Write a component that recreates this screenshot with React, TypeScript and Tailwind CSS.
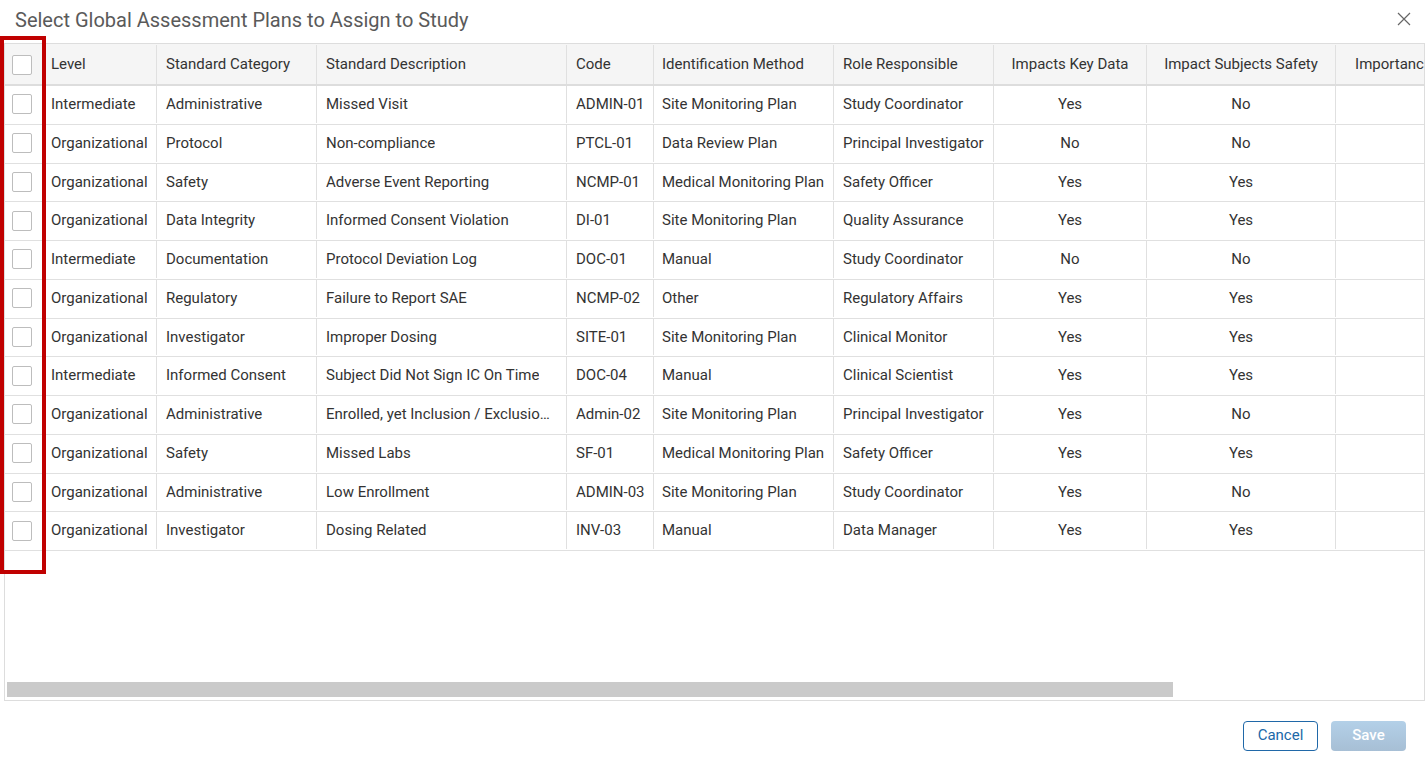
import React from "react";

type Row = {
  level: string;
  category: string;
  description: string;
  code: string;
  method: string;
  role: string;
  keyData: string;
  safety: string;
};

const rows: Row[] = [
  { level: "Intermediate", category: "Administrative", description: "Missed Visit", code: "ADMIN-01", method: "Site Monitoring Plan", role: "Study Coordinator", keyData: "Yes", safety: "No" },
  { level: "Organizational", category: "Protocol", description: "Non-compliance", code: "PTCL-01", method: "Data Review Plan", role: "Principal Investigator", keyData: "No", safety: "No" },
  { level: "Organizational", category: "Safety", description: "Adverse Event Reporting", code: "NCMP-01", method: "Medical Monitoring Plan", role: "Safety Officer", keyData: "Yes", safety: "Yes" },
  { level: "Organizational", category: "Data Integrity", description: "Informed Consent Violation", code: "DI-01", method: "Site Monitoring Plan", role: "Quality Assurance", keyData: "Yes", safety: "Yes" },
  { level: "Intermediate", category: "Documentation", description: "Protocol Deviation Log", code: "DOC-01", method: "Manual", role: "Study Coordinator", keyData: "No", safety: "No" },
  { level: "Organizational", category: "Regulatory", description: "Failure to Report SAE", code: "NCMP-02", method: "Other", role: "Regulatory Affairs", keyData: "Yes", safety: "Yes" },
  { level: "Organizational", category: "Investigator", description: "Improper Dosing", code: "SITE-01", method: "Site Monitoring Plan", role: "Clinical Monitor", keyData: "Yes", safety: "Yes" },
  { level: "Intermediate", category: "Informed Consent", description: "Subject Did Not Sign IC On Time", code: "DOC-04", method: "Manual", role: "Clinical Scientist", keyData: "Yes", safety: "Yes" },
  { level: "Organizational", category: "Administrative", description: "Enrolled, yet Inclusion / Exclusion Criteria Not Met", code: "Admin-02", method: "Site Monitoring Plan", role: "Principal Investigator", keyData: "Yes", safety: "No" },
  { level: "Organizational", category: "Safety", description: "Missed Labs", code: "SF-01", method: "Medical Monitoring Plan", role: "Safety Officer", keyData: "Yes", safety: "Yes" },
  { level: "Organizational", category: "Administrative", description: "Low Enrollment", code: "ADMIN-03", method: "Site Monitoring Plan", role: "Study Coordinator", keyData: "Yes", safety: "No" },
  { level: "Organizational", category: "Investigator", description: "Dosing Related", code: "INV-03", method: "Manual", role: "Data Manager", keyData: "Yes", safety: "Yes" },
];

function Checkbox() {
  return <div className="h-[20px] w-[20px] shrink-0 rounded-[2px] border border-[#bdbdbd] bg-white" />;
}

const cell = "flex h-full shrink-0 items-center overflow-hidden whitespace-nowrap border-r border-[#e0e0e0]";

function Cells({ r }: { r: Row }) {
  return (
    <>
      <div className={`${cell} w-[112px] pl-[6px]`}>{r.level}</div>
      <div className={`${cell} w-[160px] pl-[9px]`}>{r.category}</div>
      <div className={`${cell} w-[250px] pl-[9px] pr-[14px]`}>
        <span className="min-w-0 truncate">{r.description}</span>
      </div>
      <div className={`${cell} w-[87px] pl-[9px]`}>{r.code}</div>
      <div className={`${cell} w-[180px] pl-[8px]`}>{r.method}</div>
      <div className={`${cell} w-[160px] pl-[9px]`}>{r.role}</div>
      <div className={`${cell} w-[153px] justify-center`}>{r.keyData}</div>
      <div className={`${cell} w-[189px] justify-center`}>{r.safety}</div>
      <div className={`${cell} w-[116px] justify-center`}></div>
      <div className={`${cell} w-[160px]`}></div>
    </>
  );
}

export default function App() {
  return (
    <div
      className="relative h-[770px] w-[1426px] overflow-hidden bg-white text-[#333333]"
      style={{ fontFamily: "Roboto, 'Liberation Sans', sans-serif" }}
    >
      {/* dialog header */}
      <div className="flex h-[43px] items-start justify-between">
        <h1 className="pl-[15px] pt-[8px] text-[20px] leading-[25px] text-[#5a5a5a]">
          Select Global Assessment Plans to Assign to Study
        </h1>
        <button className="mr-[15px] mt-[12px] text-[#666666]">
          <svg width="14" height="14" viewBox="0 0 14 14" fill="none" stroke="currentColor" strokeWidth="1.2">
            <path d="M1 1 L13 13 M13 1 L1 13" />
          </svg>
        </button>
      </div>

      {/* grid */}
      <div className="relative ml-[4px] mr-[1px] flex h-[658px] flex-col border border-[#dddddd] text-[15px]">
        <div className="flex-1 overflow-hidden">
          <div className="w-[1800px]">
            {/* header row */}
            <div className="flex h-[42px] items-center border-b-2 border-[#dddddd] bg-[#f5f5f5] pt-[1px]">
              <div className="flex h-full w-[40px] shrink-0 items-center pl-[7px]">
                <Checkbox />
              </div>
              <div className={`${cell} w-[112px] pl-[6px]`}>Level</div>
              <div className={`${cell} w-[160px] pl-[9px]`}>Standard Category</div>
              <div className={`${cell} w-[250px] pl-[9px]`}>Standard Description</div>
              <div className={`${cell} w-[87px] pl-[9px]`}>Code</div>
              <div className={`${cell} w-[180px] pl-[8px]`}>Identification Method</div>
              <div className={`${cell} w-[160px] pl-[9px]`}>Role Responsible</div>
              <div className={`${cell} w-[153px] justify-center`}>Impacts Key Data</div>
              <div className={`${cell} w-[189px] justify-center`}>Impact Subjects Safety</div>
              <div className={`${cell} w-[116px] justify-center`}>Importance</div>
              <div className={`${cell} w-[160px]`}></div>
            </div>
            {rows.map((r, i) => (
              <div key={i} className="flex h-[38.75px] items-center border-b border-[#e0e0e0] pb-[1px]">
                <div className="flex h-full w-[40px] shrink-0 items-center pl-[7px]">
                  <Checkbox />
                </div>
                <Cells r={r} />
              </div>
            ))}
          </div>
        </div>
        {/* horizontal scrollbar */}
        <div className="h-[19px] px-[2px] pt-[1px]">
          <div className="h-[15px] w-[1166px] bg-[#cacaca]" />
        </div>
      </div>

      {/* footer */}
      <div className="flex justify-end gap-[13px] pr-[20px] pt-[20px]">
        <button className="h-[30px] w-[75px] rounded-[4px] border border-[#2068a8] bg-white pb-[1px] text-[15px] text-[#2068a8]">
          Cancel
        </button>
        <button className="h-[30px] w-[75px] rounded-[4px] bg-gradient-to-b from-[#b3d0e8] to-[#a7bfd5] pb-[1px] text-[15px] font-medium text-white">
          Save
        </button>
      </div>

      {/* highlight around the selection column */}
      <div className="pointer-events-none absolute left-[0px] top-[36px] h-[538px] w-[46px] border-[4px] border-[#c00000]" />
    </div>
  );
}
